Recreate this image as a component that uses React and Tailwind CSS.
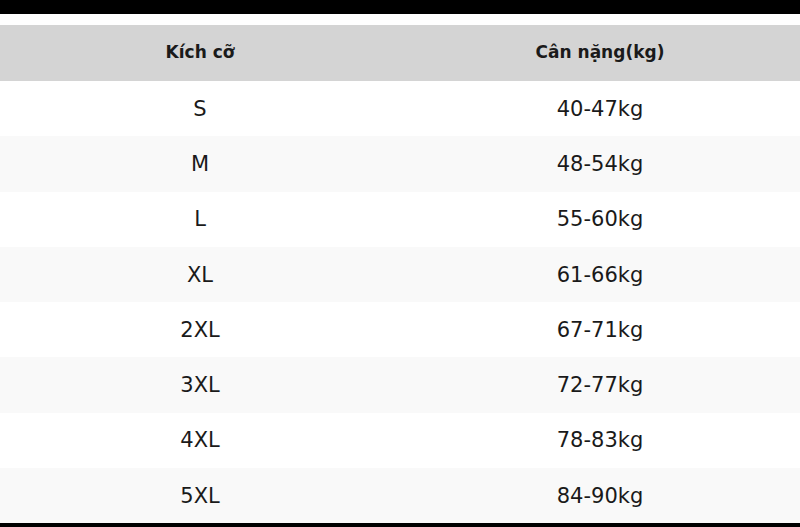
const rows = [
  ["S", "40-47kg"],
  ["M", "48-54kg"],
  ["L", "55-60kg"],
  ["XL", "61-66kg"],
  ["2XL", "67-71kg"],
  ["3XL", "72-77kg"],
  ["4XL", "78-83kg"],
  ["5XL", "84-90kg"],
];

export default function App() {
  return (
    <div
      className="w-[800px] h-[527px] bg-white flex flex-col overflow-hidden text-[#1a1a1a]"
      style={{ fontFamily: '"DejaVu Sans", sans-serif' }}
    >
      <div className="h-[14px] bg-black" />
      <div className="h-[11px] bg-white" />
      {/* Header */}
      <div className="h-[56px] bg-[#d4d4d4] grid grid-cols-2 items-center text-[17px] font-bold">
        <div className="text-center">Kích cỡ</div>
        <div className="text-center">Cân nặng(kg)</div>
      </div>
      {rows.map(([size, weight], i) => (
        <div
          key={size}
          className={`h-[55.25px] pt-[2px] grid grid-cols-2 items-center text-[21px] ${
            i % 2 === 1 ? "bg-[#f9f9f9]" : "bg-white"
          }`}
        >
          <div className="text-center">{size}</div>
          <div className="text-center">{weight}</div>
        </div>
      ))}
      <div className="flex-1 bg-black" />
    </div>
  );
}
